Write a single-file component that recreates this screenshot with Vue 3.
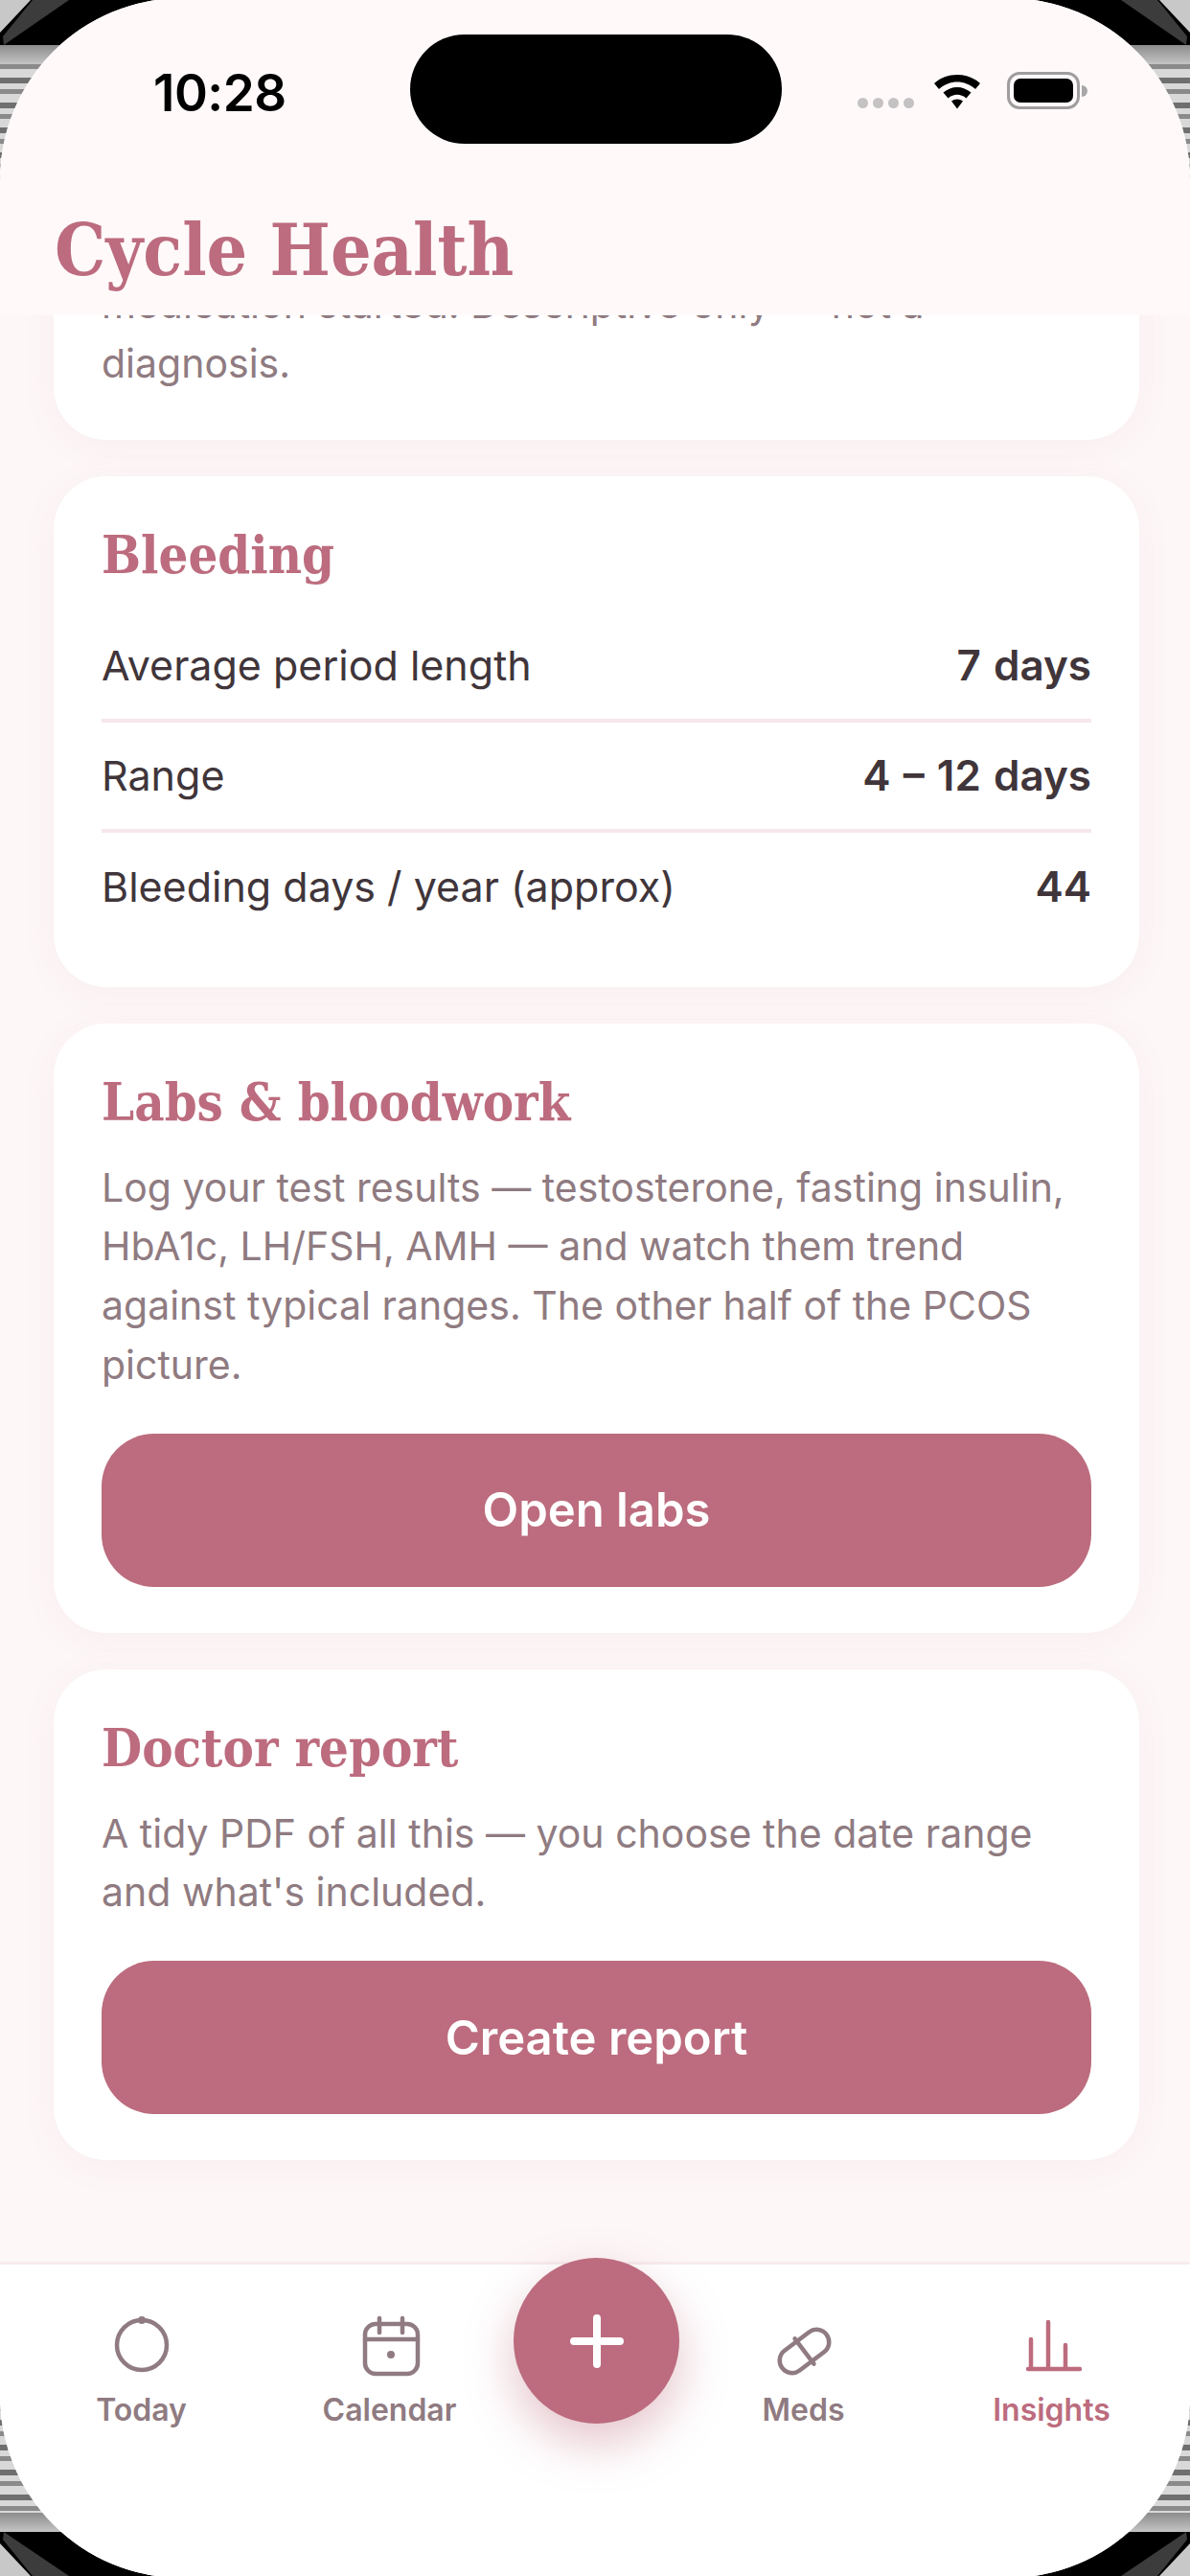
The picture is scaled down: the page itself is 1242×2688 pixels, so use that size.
<template>
  <div class="device">
    <svg class="bezel" viewBox="0 0 1242 2688" aria-hidden="true">
      <defs>
        <pattern id="stripes" width="4" height="26" patternUnits="userSpaceOnUse">
          <rect width="4" height="26" fill="#d8d8d8" />
          <rect y="3" width="4" height="6" fill="#6f6f6f" />
          <rect y="15" width="4" height="5" fill="#8a8a8a" />
        </pattern>
        <linearGradient id="band" x1="0" x2="0" y1="0" y2="1">
          <stop offset="0" stop-color="#8c8c8c" />
          <stop offset="1" stop-color="#c4c4c4" />
        </linearGradient>
      </defs>
      <rect x="0" y="66" width="1242" height="130" fill="url(#stripes)" />
      <rect x="0" y="2492" width="1242" height="130" fill="url(#stripes)" />
      <rect x="0" y="47" width="1242" height="20" fill="url(#band)" />
      <rect x="0" y="2622" width="1242" height="20" fill="url(#band)" />
      <path d="M0 0H1242V47H0Z" fill="#000" />
      <path d="M0 2642H1242V2688H0Z" fill="#000" />
      <path d="M0 0H32L0 34Z M1242 0H1210L1242 34Z M0 2688H32L0 2654Z M1242 2688H1210L1242 2654Z" fill="#c8c8c8" />
      <path d="M4 47L72 0H34L3 38Z M1238 47L1170 0H1208L1239 38Z M4 2642L72 2688H34L3 2650Z M1238 2642L1170 2688H1208L1239 2650Z" fill="#3c3c3c" />
    </svg>
    <div class="screen">
      <header class="top">
        <div class="status">
          <span class="time">10:28</span>
          <div class="island"></div>
          <div class="status-right">
            <div class="dots"><i></i><i></i><i></i><i></i></div>
            <svg class="wifi" viewBox="0 0 52 38">
              <path d="M2 11C15 -1 37 -1 50 11L45 17C34 7 18 7 7 17Z" />
              <path d="M11.5 20.5C20 13 32 13 40.5 20.5L35.5 26.500C29.500 21.500 22.500 21.500 16.500 26.500Z" />
              <path d="M20 29.500C23.500 26.800 28.500 26.800 32 29.500L26 37.500Z" />
            </svg>
            <div class="battery"><div class="battery-fill"></div></div>
            <div class="battery-nub"></div>
          </div>
        </div>
        <h1 class="brand">Cycle Health</h1>
      </header>

      <main class="scroll">
        <section class="card">
          <h2>Cycle patterns</h2>
          <p>
            How your cycle length has shifted since your current
            medication started. Descriptive only — not a diagnosis.
          </p>
        </section>

        <section class="card">
          <h2>Bleeding</h2>
          <div class="rows">
            <div v-for="row in bleeding" :key="row.label" class="row">
              <span>{{ row.label }}</span>
              <strong>{{ row.value }}</strong>
            </div>
          </div>
        </section>

        <section class="card">
          <h2>Labs &amp; bloodwork</h2>
          <p>
            Log your test results — testosterone, fasting insulin, HbA1c,
            LH/FSH, AMH — and watch them trend against typical ranges. The
            other half of the PCOS picture.
          </p>
          <button class="action">Open labs</button>
        </section>

        <section class="card">
          <h2>Doctor report</h2>
          <p>A tidy PDF of all this — you choose the date range and what's included.</p>
          <button class="action">Create report</button>
        </section>
      </main>

      <nav class="tabs">
        <div class="tab">
          <svg viewBox="0 0 72 72">
            <circle cx="36" cy="36" r="26" />
            <circle class="solid" cx="36" cy="10" r="4" />
          </svg>
          <span>Today</span>
        </div>
        <div class="tab">
          <svg viewBox="0 0 72 72">
            <rect x="10" y="14" width="55" height="52" rx="11" />
            <path d="M10 30H65M25 8V23M49 8V23" />
            <circle class="solid" cx="37" cy="46" r="4" />
          </svg>
          <span>Calendar</span>
        </div>
        <div class="fab-slot">
          <button class="fab">
            <svg viewBox="0 0 60 60"><path d="M30 6V54M6 30H54" /></svg>
          </button>
        </div>
        <div class="tab">
          <svg viewBox="0 0 72 72">
            <g transform="rotate(-37 36.500 42.500)">
              <rect x="7.500" y="29.500" width="58" height="26" rx="13" />
              <path d="M36.500 26V59" />
            </g>
          </svg>
          <span>Meds</span>
        </div>
        <div class="tab active">
          <svg viewBox="0 0 72 72">
            <path d="M11 61H65M14 61V30M32 61V12M50 61V36" />
          </svg>
          <span>Insights</span>
        </div>
      </nav>
    </div>
    <div class="glint glint-l"></div>
    <div class="glint glint-r"></div>
  </div>
</template>

<script setup>
const bleeding = [
  { label: 'Average period length', value: '7 days' },
  { label: 'Range', value: '4 – 12 days' },
  { label: 'Bleeding days / year (approx)', value: '44' }
];
</script>

<style>
html,
body {
  margin: 0;
  background: #fff;
}
</style>

<style scoped>
.device {
  position: relative;
  width: 1242px;
  height: 2688px;
  overflow: hidden;
  background: #b9b9b9;
  font-family: Inter, "Noto Sans", sans-serif;
}

.bezel {
  position: absolute;
  inset: 0;
  width: 1242px;
  height: 2688px;
}

.glint {
  position: absolute;
  top: 183px;
  width: 8px;
  height: 56px;
  background: linear-gradient(#555, rgba(85, 85, 85, 0));
}

.glint-l {
  left: 0;
}

.glint-r {
  right: 0;
}

.screen {
  position: relative;
  display: flex;
  flex-direction: column;
  height: 2692px;
  margin-top: -2px;
  border-radius: 190px;
  overflow: hidden;
  background: #fdf7f8;
}

.top {
  flex-shrink: 0;
  height: 331px;
  box-sizing: border-box;
  background: #fff9fa;
  z-index: 1;
}

.status {
  position: relative;
  height: 213px;
}

.time {
  position: absolute;
  left: 160px;
  top: 67px;
  font-size: 53px;
  line-height: 64px;
  font-weight: 600;
  letter-spacing: -0.5px;
  color: #000;
}

.island {
  position: absolute;
  left: 428px;
  top: 38px;
  width: 388px;
  height: 114px;
  border-radius: 57px;
  background: #000;
}

.status-right {
  position: absolute;
  left: 895px;
  top: 77px;
  display: flex;
  align-items: center;
}

.dots {
  display: flex;
  gap: 5px;
  margin-top: 26px;
  width: 60px;
}

.dots i {
  width: 11px;
  height: 11px;
  border-radius: 50%;
  background: #c4c2c3;
}

.wifi {
  width: 52px;
  height: 38px;
  margin-left: 18px;
  fill: #000;
}

.battery {
  width: 76px;
  height: 39px;
  margin-left: 26px;
  box-sizing: border-box;
  border: 3px solid #9f9d9e;
  border-radius: 13px;
  padding: 4px;
}

.battery-fill {
  height: 100%;
  border-radius: 7px;
  background: #000;
}

.battery-nub {
  width: 6px;
  height: 12px;
  margin-left: 2px;
  border-radius: 0 6px 6px 0;
  background: #a8a6a7;
}

.brand {
  margin: 0 0 0 57px;
  font-family: "DejaVu Serif", "Liberation Serif", serif;
  font-stretch: condensed;
  font-size: 74.500px;
  line-height: 100px;
  font-weight: 700;
  color: #bc6c7e;
}

.scroll {
  flex: 1;
  min-height: 0;
  overflow: hidden;
  display: flex;
  flex-direction: column;
  justify-content: flex-end;
  gap: 38px;
  padding: 0 53px 106px 56px;
}

.card {
  flex-shrink: 0;
  padding: 47px 50px 48px;
  border-radius: 55px;
  background: #fff;
  box-shadow: 0 6px 36px rgba(188, 108, 126, 0.07);
}

.card h2 {
  margin: 0;
  font-family: "DejaVu Serif", "Liberation Serif", serif;
  font-stretch: condensed;
  font-size: 54px;
  line-height: 70px;
  font-weight: 700;
  color: #bc6c7e;
}

.card p {
  margin: 24px 0 0;
  font-size: 41px;
  line-height: 61.700px;
  color: #8f7b81;
}

.rows {
  margin-top: 25px;
}

.row {
  display: flex;
  justify-content: space-between;
  align-items: center;
  height: 111px;
  font-size: 43px;
  color: #40353a;
  border-bottom: 4px solid #f7e6eb;
}

.row:last-child {
  border-bottom: none;
  height: 113px;
}

.row strong {
  font-size: 44px;
  font-weight: 600;
  word-spacing: 2px;
}

.action {
  display: block;
  width: 100%;
  height: 160px;
  margin-top: 40px;
  border: none;
  border-radius: 55px;
  background: #bc6c7e;
  color: #fff;
  font: 600 49px Inter, sans-serif;
}

.tabs {
  flex-shrink: 0;
  height: 330px;
  box-sizing: border-box;
  display: flex;
  padding: 0 15px 0 18px;
  border-top: 3px solid #f8ecef;
  background: #fff;
  z-index: 1;
}

.tab {
  flex: 1;
  display: flex;
  flex-direction: column;
  align-items: center;
  padding-top: 48px;
  gap: 12px;
  color: #8f7b81;
}

.tab svg {
  width: 72px;
  height: 72px;
  fill: none;
  stroke: currentColor;
  stroke-width: 4.500;
  stroke-linecap: round;
}

.tab svg .solid {
  fill: currentColor;
  stroke: none;
}

.tab span {
  font-size: 32px;
  line-height: 40px;
  font-weight: 600;
}

.tab.active {
  color: #bc6c7e;
}

.fab-slot {
  width: 173px;
}

.fab {
  display: flex;
  align-items: center;
  justify-content: center;
  width: 173px;
  height: 173px;
  margin-top: -7px;
  padding: 0;
  border: none;
  border-radius: 50%;
  background: #bc6c7e;
  box-shadow: 0 20px 50px rgba(188, 108, 126, 0.4);
}

.fab svg {
  width: 60px;
  height: 60px;
  fill: none;
  stroke: #fff;
  stroke-width: 8;
  stroke-linecap: round;
}
</style>
